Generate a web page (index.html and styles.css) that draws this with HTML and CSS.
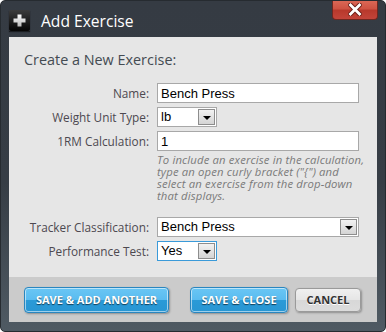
FILE: index.html
```html
<!DOCTYPE html>
<html lang="en">
<head>
	<meta charset="UTF-8" />
	<meta name="viewport" content="width=device-width, initial-scale=1.0" />
	<title>Add Exercise</title>
	<link rel="stylesheet" href="styles.css">
</head>
<body>
	<div class="dialog">
		<div class="titlebar">
			<span class="title-icon">
				<svg width="21" height="21" viewBox="0 0 21 21">
					<defs>
						<linearGradient id="ib" x1="0" y1="0" x2="0" y2="1">
							<stop offset="0" stop-color="#3c3c3c"/>
							<stop offset="1" stop-color="#050505"/>
						</linearGradient>
						<linearGradient id="ip" x1="0" y1="0" x2="0" y2="1">
							<stop offset="0" stop-color="#ffffff"/>
							<stop offset="1" stop-color="#b9b9b9"/>
						</linearGradient>
					</defs>
					<rect x="0" y="0" width="21" height="21" rx="2" fill="url(#ib)"/>
					<path d="M8.5 4.5h4v4h4v4h-4v4h-4v-4h-4v-4h4z" fill="url(#ip)"/>
				</svg>
			</span>
			<span class="title">Add Exercise</span>
			<button class="close-btn">
				<svg width="14" height="13" viewBox="0 0 14 13">
					<path d="M2.5 2l9 9M11.5 2l-9 9" stroke="#6b1d16" stroke-width="4.6" stroke-linecap="square"/>
					<path d="M2.5 2l9 9M11.5 2l-9 9" stroke="#ffffff" stroke-width="2.8" stroke-linecap="square"/>
				</svg>
			</button>
		</div>

		<div class="panel">
			<div class="content">
				<h2>Create a New Exercise:</h2>
				<div class="form">
					<label>Name:</label>
					<input class="field" type="text" value="Bench Press" />

					<label>Weight Unit Type:</label>
					<div class="select short">
						<span class="value">lb</span>
						<span class="arrow"></span>
					</div>

					<label>1RM Calculation:</label>
					<input class="field" type="text" value="1" />

					<span></span>
					<p class="help">To include an exercise in the calculation, type an open curly bracket ("{") and select an exercise from the drop-down that displays.</p>

					<label>Tracker Classification:</label>
					<div class="select">
						<span class="value">Bench Press</span>
						<span class="arrow"></span>
					</div>

					<label>Performance Test:</label>
					<div class="select short focused">
						<span class="value">Yes</span>
						<span class="arrow"></span>
					</div>
				</div>
			</div>

			<div class="footer">
				<button class="btn blue add">SAVE &amp; ADD ANOTHER</button>
				<button class="btn blue save">SAVE &amp; CLOSE</button>
				<button class="btn grey cancel">CANCEL</button>
			</div>
		</div>
	</div>
</body>
</html>
```

FILE: styles.css
```css
body {
	margin: 0;
	background-color: #ffffff;
	font-family: "Open Sans", Arial, sans-serif;
}
.dialog {
	width: 386px;
	height: 332px;
	box-sizing: border-box;
	border: 1px solid #262b30;
	border-radius: 5px;
	background: linear-gradient(#353b43 0%, #363d45 55%, #4f5a63 100%);
	display: flex;
	flex-direction: column;
	overflow: hidden;
}
.titlebar {
	display: flex;
	align-items: center;
	height: 36px;
	padding: 3px 7px 0 8px;
	box-sizing: border-box;
}
.title-icon {
	width: 21px;
	height: 21px;
	display: block;
	box-shadow: 0 1px 1px rgba(0,0,0,0.5);
}
.title-icon svg {
	display: block;
}
.title {
	margin-left: 11px;
	color: #ffffff;
	font-size: 15.6px;
	line-height: 22px;
}
.close-btn {
	align-self: flex-start;
	margin: -4px 0 0 auto;
	width: 46px;
	height: 20px;
	padding: 0;
	border: 1px solid #6e2720;
	border-top: none;
	border-radius: 0 0 4px 4px;
	background: linear-gradient(#dc6a58 0%, #cf5343 45%, #b8392c 55%, #c2443a 100%);
	box-shadow: inset 0 1px 0 rgba(255,255,255,0.25);
	display: flex;
	align-items: center;
	justify-content: center;
}
.close-btn svg {
	display: block;
}
.panel {
	margin: 0 8px 9px 8px;
	flex: 1;
	display: flex;
	flex-direction: column;
	background-color: #e6e6e6;
}
.content {
	flex: 1;
	padding: 13px 18px 0 15px;
}
h2 {
	margin: 0 0 13px 0;
	font-size: 14.4px;
	line-height: 20px;
	font-weight: normal;
	color: #444b52;
}
.form {
	display: grid;
	grid-template-columns: 125px minmax(0, 1fr);
	column-gap: 8px;
	row-gap: 4px;
	align-items: center;
}
.form label {
	text-align: right;
	font-size: 11.8px;
	color: #4d4950;
	white-space: nowrap;
}
.field {
	height: 20px;
	box-sizing: border-box;
	margin: 0;
	padding: 0 3px;
	border: 1px solid #a8a8a8;
	background-color: #ffffff;
	font-family: "Liberation Sans", Arial, sans-serif;
	font-size: 13px;
	color: #000000;
}
.select {
	height: 20px;
	box-sizing: border-box;
	border: 1px solid #a8a8a8;
	background-color: #ffffff;
	display: flex;
	align-items: stretch;
	padding: 1px;
}
.select.short {
	width: 60px;
}
.select.focused {
	border-color: #3a9ad9;
}
.select .value {
	flex: 1;
	padding-left: 2px;
	font-family: "Liberation Sans", Arial, sans-serif;
	font-size: 13px;
	line-height: 16px;
	color: #000000;
}
.select .arrow {
	width: 15px;
	border: 1px solid #8d8d8d;
	background: linear-gradient(#f2f2f2, #d4d4d4);
	display: flex;
	align-items: center;
	justify-content: center;
}
.select .arrow::after {
	content: "";
	border-left: 4px solid transparent;
	border-right: 4px solid transparent;
	border-top: 4px solid #000000;
	margin-top: 1px;
}
.help {
	margin: -1px 0 11px 0;
	width: 212px;
	font-size: 11.3px;
	letter-spacing: 0.15px;
	line-height: 12px;
	font-style: italic;
	color: #7a7a7a;
}
.footer {
	height: 45px;
	box-sizing: border-box;
	background-color: #cbcbcb;
	display: flex;
	align-items: center;
	padding: 0 0 0 15px;
}
.btn {
	height: 26px;
	padding: 0;
	border-radius: 4px;
	font-family: "Open Sans", Arial, sans-serif;
	font-size: 11px;
	font-weight: bold;
	cursor: pointer;
	box-shadow: 1px 1px 2px rgba(0,0,0,0.3);
}
.btn.blue {
	border: 1px solid #2a86bf;
	color: #ffffff;
	background: linear-gradient(#6ac6f4 0%, #5abcf0 48%, #2a9ad7 52%, #2896d3 100%);
	text-shadow: 0 1px 1px rgba(0,0,0,0.6);
	box-shadow: inset 0 0 0 1px rgba(255,255,255,0.55), 1px 1px 2px rgba(0,0,0,0.3);
}
.btn.grey {
	height: 24px;
	border: 1px solid #9a9a9a;
	color: #333333;
	background: linear-gradient(#f0f0f0 0%, #e6e6e6 48%, #d8d8d8 52%, #dcdcdc 100%);
	text-shadow: 0 1px 0 #ffffff;
}
.add {
	width: 145px;
}
.save {
	width: 98px;
	margin-left: 21px;
}
.cancel {
	width: 66px;
	margin-left: 7px;
}
```
